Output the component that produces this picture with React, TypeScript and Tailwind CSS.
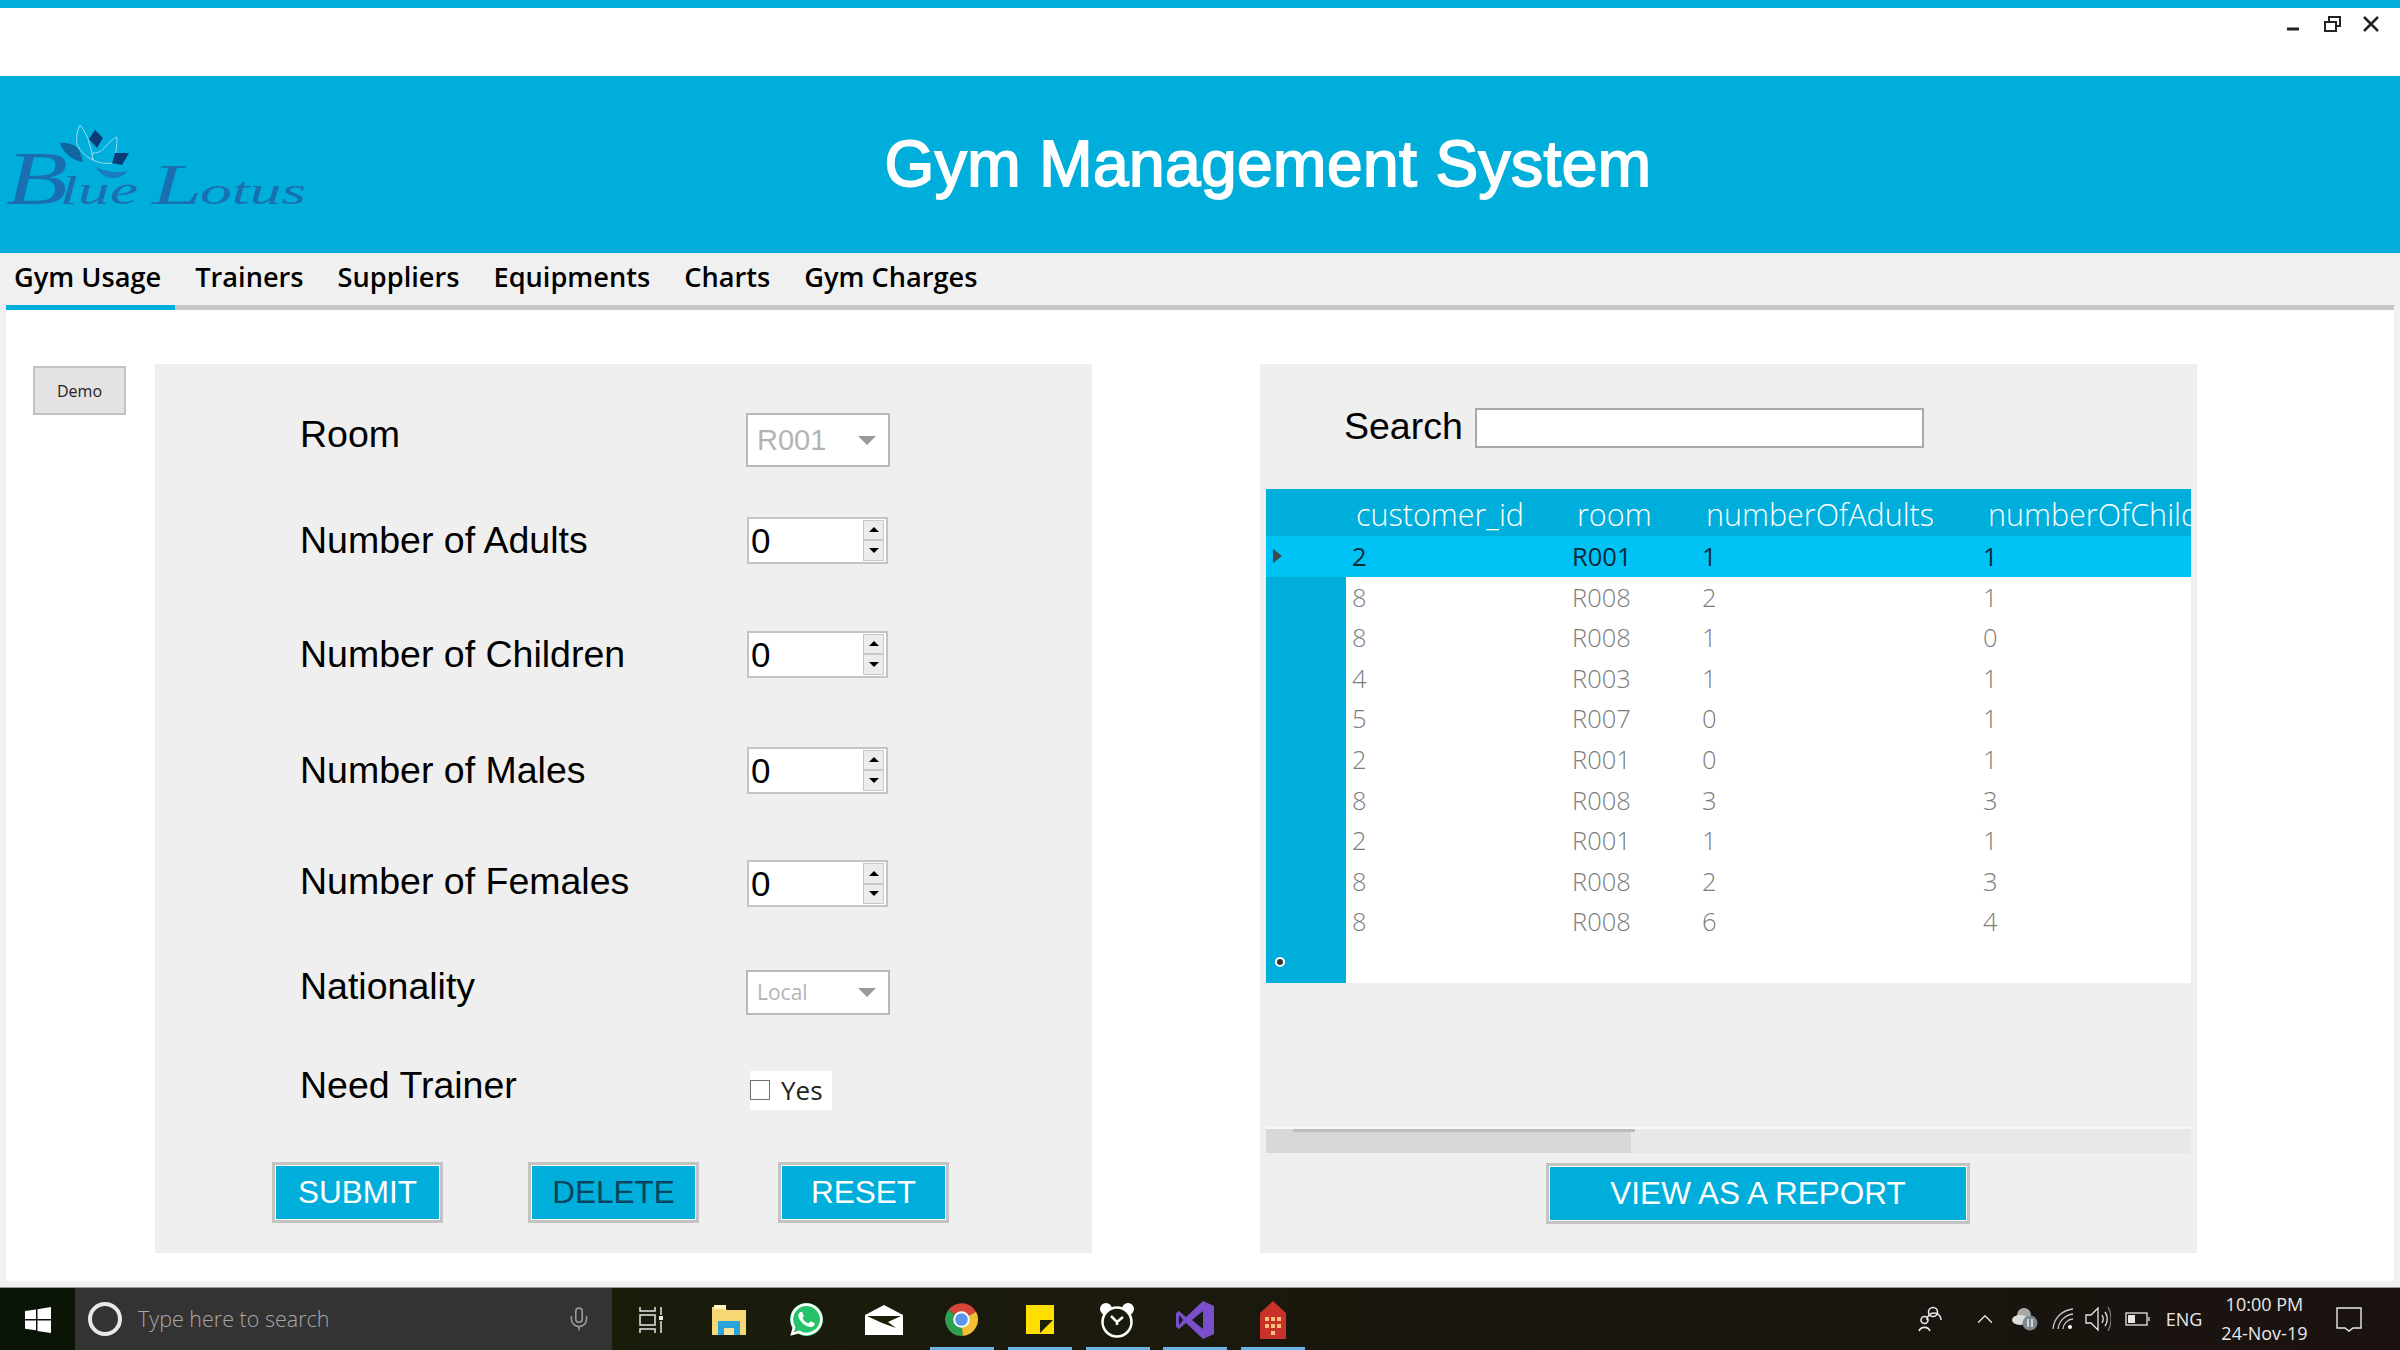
import { FaWhatsapp } from "react-icons/fa";
import { ChevronUp, Mic } from "lucide-react";

const rows = [
  ["2", "R001", "1", "1"],
  ["8", "R008", "2", "1"],
  ["8", "R008", "1", "0"],
  ["4", "R003", "1", "1"],
  ["5", "R007", "0", "1"],
  ["2", "R001", "0", "1"],
  ["8", "R008", "3", "3"],
  ["2", "R001", "1", "1"],
  ["8", "R008", "2", "3"],
  ["8", "R008", "6", "4"],
];

const logoFont = '"Liberation Serif", serif';

function Logo() {
  return (
    <svg width="320" height="110" viewBox="0 0 320 110" className="ml-[6px] mt-[36px]">
      <path d="M71 32c-1-7 0-13 3-19 4 5 8 12 9 18 2 5 3 10 4 17-7-3-13-9-16-16zM87 48c-1-4-1-6 0-7 7 0 10-3 14-8 4-4 7-7 10-8 0 9-1 19-5 26-6 1-13 0-19-3z" fill="#00aedb" fillOpacity="0.6" stroke="#9adcf0" strokeWidth="1" />
      <path d="M89 18l8 8-6 10-8-9z" fill="#0b3a78" />
      <path d="M54 31c8-1 16 2 19 7 2 4 3 8 4 12-10-1-20-9-23-19z" fill="#12669f" />
      <path d="M109 41h14l-7 12-10-2z" fill="#0b3a78" />
      <path d="M90 55c10 5 22 6 32 4-4 5-10 7-15 7-8 0-14-5-17-11z" fill="#1a7cc0" />
      <text x="0" y="92" textLength="62" lengthAdjust="spacingAndGlyphs" fontFamily={logoFont} fontStyle="italic" fontSize="76" fill="#1a6fb0">B</text>
      <text x="54" y="92" textLength="78" lengthAdjust="spacingAndGlyphs" fontFamily={logoFont} fontStyle="italic" fontSize="40" fill="#1a6fb0">lue</text>
      <text x="146" y="92" textLength="50" lengthAdjust="spacingAndGlyphs" fontFamily={logoFont} fontStyle="italic" fontSize="56" fill="#1a6fb0">L</text>
      <text x="194" y="92" textLength="106" lengthAdjust="spacingAndGlyphs" fontFamily={logoFont} fontStyle="italic" fontSize="38" fill="#1a6fb0">otus</text>
    </svg>
  );
}

function SpinBox({ className }: { className?: string }) {
  return (
    <div className={`w-[141px] h-[47px] ml-[1px] bg-white border-[2px] border-[#c4c4c4] flex items-center justify-between pl-[1px] pr-[2px] ${className ?? ""}`}>
      <span className="font-['Liberation_Sans',sans-serif] text-[35px] text-black leading-none pl-[1px]">0</span>
      <div className="flex flex-col w-[21px] h-[41px]">
        <div className="flex-1 bg-[#ececec] border border-[#c8c8c8] flex items-center justify-center">
          <div className="w-0 h-0 border-x-[5px] border-x-transparent border-b-[5px] border-b-black" />
        </div>
        <div className="flex-1 bg-[#ececec] border border-[#c8c8c8] flex items-center justify-center">
          <div className="w-0 h-0 border-x-[5px] border-x-transparent border-t-[5px] border-t-black" />
        </div>
      </div>
    </div>
  );
}

function Combo({ value, className, textClass }: { value: string; className: string; textClass: string }) {
  return (
    <div className={`w-[144px] bg-white border-[2px] border-[#b9b9b9] flex items-center justify-between pl-[9px] pr-[12px] ${className}`}>
      <span className={`text-[#b4b4b4] leading-none ${textClass}`}>{value}</span>
      <div className="w-0 h-0 border-x-[9px] border-x-transparent border-t-[9px] border-t-[#9a9a9a]" />
    </div>
  );
}

function ActionButton({ label, width, dark }: { label: string; width: string; dark?: boolean }) {
  return (
    <div className={`h-[61px] ${width} bg-white border-[3px] border-[#c3c3c3] p-[1px]`}>
      <div className={`h-full bg-[#00aedb] flex items-center justify-center font-['Liberation_Sans',sans-serif] text-[31.5px] ${dark ? "text-[#0a4560]" : "text-white"}`}>
        {label}
      </div>
    </div>
  );
}

function FormRow({ label, height, children }: { label: string; height: string; children: React.ReactNode }) {
  return (
    <div className={`flex items-center ${height}`}>
      <div className="w-[591px] pl-[145px] font-['Liberation_Sans',sans-serif] text-[37.5px] text-black whitespace-nowrap">{label}</div>
      {children}
    </div>
  );
}

function Slot({ children, active }: { children: React.ReactNode; active?: boolean }) {
  return (
    <div className="relative w-[77.75px] h-full flex items-center justify-center pt-[1px]">
      {children}
      {active && <div className="absolute bottom-0 left-[7px] w-[64px] h-[3px] bg-[#6cb2e4]" />}
    </div>
  );
}

export default function App() {
  return (
    <div className="w-[2400px] h-[1350px] flex flex-col overflow-hidden bg-white font-['Open_Sans',sans-serif]">
      <div className="h-[8px] bg-[#00aedb]" />

      {/* window buttons */}
      <div className="h-[68px] bg-white flex justify-end items-start pt-[6px]">
        <svg width="100" height="22" viewBox="0 0 100 22" className="mr-[17px]" fill="none" stroke="#222" strokeWidth="2">
          <path d="M4 15h12" strokeWidth="3" />
          <path d="M42 8h11v9H42zM46 8V3h11v9h-4" />
          <path d="M81 3l14 14M95 3L81 17" strokeWidth="2.5" />
        </svg>
      </div>

      {/* header */}
      <div className="h-[177px] bg-[#00aedb] relative flex">
        <Logo />
        <div className="absolute inset-0 flex items-center justify-center pl-[136px] pb-[1px] font-['Liberation_Sans',sans-serif] text-[64px] tracking-[0.45px] [-webkit-text-stroke:1.8px_white] text-white">
          Gym Management System
        </div>
      </div>

      {/* tabs */}
      <div className="h-[57px] bg-[#f0f0f0] px-[6px] flex flex-col justify-end">
        <div className="flex-1 flex items-center pl-[8px] pb-[4px] gap-[34px] font-semibold text-[27.2px] text-black leading-none">
          <span>Gym Usage</span>
          <span>Trainers</span>
          <span>Suppliers</span>
          <span>Equipments</span>
          <span>Charts</span>
          <span>Gym Charges</span>
        </div>
        <div className="h-[5px] bg-[#c8c8c8]">
          <div className="w-[169px] h-full bg-[#00aedb]" />
        </div>
      </div>

      {/* content */}
      <div className="flex-1 flex bg-white border-x-[6px] border-[#f0f0f0] pt-[54px]">
        <div className="ml-[27px] mt-[2px] w-[93px] h-[49px] bg-[#e3e3e3] border-[2px] border-[#c2c2c2] flex items-center justify-center text-[16px] text-[#222]">
          Demo
        </div>

        <div className="ml-[29px] w-[937px] h-[889px] bg-[#efefef] pt-[17px] flex flex-col">
          <FormRow label="Room" height="h-[106px]">
            <Combo value="R001" className="h-[54px] mt-[12px]" textClass="font-['Liberation_Sans',sans-serif] text-[29px]" />
          </FormRow>
          <FormRow label="Number of Adults" height="h-[106px]"><SpinBox /></FormRow>
          <FormRow label="Number of Children" height="h-[122px]"><SpinBox /></FormRow>
          <FormRow label="Number of Males" height="h-[110px]"><SpinBox /></FormRow>
          <FormRow label="Number of Females" height="h-[112px]"><SpinBox className="mt-[5px]" /></FormRow>
          <FormRow label="Nationality" height="h-[98px]">
            <Combo value="Local" className="h-[45px] mt-[12px]" textClass="text-[21px]" />
          </FormRow>
          <FormRow label="Need Trainer" height="h-[100px]">
            <div className="ml-[4px] mt-[10px] w-[82px] h-[39px] bg-white flex items-center gap-[11px]">
              <div className="w-[20px] h-[20px] border-[1.5px] border-[#707070] bg-white" />
              <span className="text-[26px] text-[#222] leading-none">Yes</span>
            </div>
          </FormRow>
          <div className="flex pl-[117px] mt-[27px]">
            <ActionButton label="SUBMIT" width="w-[171px]" />
            <ActionButton label="DELETE" width="w-[171px] ml-[85px]" dark />
            <ActionButton label="RESET" width="w-[171px] ml-[79px]" />
          </div>
        </div>

        <div className="ml-[168px] w-[937px] h-[889px] bg-[#efefef] flex flex-col">
          <div className="h-[125px] flex items-start pt-[44px] pl-[84px] gap-[12px]">
            <span className="font-['Liberation_Sans',sans-serif] text-[37.5px] text-black leading-none">Search</span>
            <div className="w-[449px] h-[40px] bg-white border-[2px] border-[#a9a9a9]" />
          </div>
          <div className="mx-[6px] w-[925px] overflow-hidden">
            <div className="h-[47px] bg-[#00aedb] flex items-center text-white text-[30.5px] font-light leading-none whitespace-nowrap pt-[3px]">
              <div className="w-[80px] shrink-0" />
              <div className="w-[220px] pl-[10px] shrink-0">customer_id</div>
              <div className="w-[135px] pl-[11px] shrink-0">room</div>
              <div className="w-[281px] pl-[5px] shrink-0">numberOfAdults</div>
              <div className="pl-[6px] shrink-0 w-[209px] overflow-hidden">numberOfChildren</div>
            </div>
            {rows.map((r, i) => (
              <div key={i} className={`h-[40.6px] flex items-stretch text-[25.5px] leading-none ${i === 0 ? "bg-[#00c3f5] text-[#0b2a38] font-normal" : "bg-[#00aedb] text-[#7c7c7c] font-light"}`}>
                <div className="w-[80px] flex items-center pl-[7px] shrink-0">
                  {i === 0 && <div className="w-0 h-0 border-y-[7px] border-y-transparent border-l-[9px] border-l-[#3f4a4f]" />}
                </div>
                <div className={`flex-1 flex items-center pt-[1px] ${i === 0 ? "" : "bg-white"}`}>
                  <div className="w-[220px] pl-[6px] shrink-0">{r[0]}</div>
                  <div className="w-[135px] pl-[6px] shrink-0">{r[1]}</div>
                  <div className="w-[281px] pl-[1px] shrink-0">{r[2]}</div>
                  <div className="pl-[1px] shrink-0">{r[3]}</div>
                </div>
              </div>
            ))}
            <div className="h-[41px] flex bg-white">
              <div className="w-[80px] h-full bg-[#00aedb] flex items-center pl-[9px]">
                <div className="w-[10px] h-[10px] rounded-full bg-[#333] border-[2px] border-white" />
              </div>
            </div>
          </div>

          {/* horizontal scrollbar */}
          <div className="mx-[6px] mt-[144px] w-[925px] h-[26px] bg-[#e8e8e8] border-t-[2px] border-[#f8f8f8] relative">
            <div className="absolute top-0 left-[27px] w-[342px] h-[3px] bg-[#bdbdbd]" />
            <div className="w-[365px] h-full bg-[#d8d8d8]" />
          </div>

          <ActionButton label="VIEW AS A REPORT" width="w-[424px] ml-[286px] mt-[10px]" />
        </div>
      </div>

      <div className="h-[6px] bg-[#f0f0f0]" />

      {/* taskbar */}
      <div className="h-[63px] flex items-stretch bg-gradient-to-r from-[#1a2008] to-[#1a1210] border-t-[1px] border-[#9a9a9a] text-white">
        <div className="w-[75px] bg-[#0a1508] flex items-center justify-center pt-[1px]">
          <svg width="26" height="26" viewBox="0 0 26 26" fill="#fff">
            <path d="M0 4l11-1.600V12H0zM12.500 2.200L26 0v12H12.500zM0 13.500h11v9.800L0 21.800zM12.500 13.500H26V26l-13.500-2z" />
          </svg>
        </div>
        <div className="w-[537px] bg-[#333333] flex items-center pl-[13px]">
          <div className="w-[34px] h-[34px] rounded-full border-[4px] border-[#e8e8e8]" />
          <span className="ml-[16px] text-[21.5px] text-[#a8a8a8] font-light">Type here to search</span>
          <Mic className="ml-auto mr-[20px] w-[26px] h-[28px] text-[#9a9a9a]" strokeWidth={1.5} />
        </div>

        <Slot>
          <svg width="24" height="28" viewBox="0 0 24 28" fill="none" stroke="#e8e8e8" strokeWidth="1.5">
            <path d="M1 1v4h15V1M1 9h15v10H1zM1 27v-4h15v4M22 1v8M22 15v12" />
            <rect x="20" y="10" width="4" height="4" fill="#e8e8e8" stroke="none" />
          </svg>
        </Slot>
        <Slot>
          <svg width="34" height="30" viewBox="0 0 34 30">
            <path d="M0 2h12l3 3h19v25H0z" fill="#f7d774" />
            <rect x="2" y="0" width="12" height="4" fill="#fff3c4" />
            <path d="M6 30V16h22v14h-6v-7H12v7z" fill="#2aa5dc" />
            <rect x="12" y="23" width="10" height="7" fill="#f7e29a" />
          </svg>
        </Slot>
        <Slot>
          <div className="w-[33px] h-[33px] rounded-full bg-[#25c36a] flex items-center justify-center">
            <FaWhatsapp className="w-[37px] h-[37px] shrink-0 text-white" />
          </div>
        </Slot>
        <Slot>
          <svg width="38" height="30" viewBox="0 0 38 30">
            <path d="M0 10L19 0l19 10v20H0z" fill="#fff" />
            <path d="M2 11h34l-13 6 8 6-14-5z" fill="#1a2008" />
          </svg>
        </Slot>
        <Slot active>
          <svg width="35" height="35" viewBox="0 0 36 36">
            <path d="M18 18L4.500 8A17 17 0 0 1 33 10z" fill="#d8453a" />
            <path d="M18 18l15-8a17 17 0 0 1-14 25z" fill="#f0c030" />
            <path d="M18 18l1 17A17 17 0 0 1 4.500 8z" fill="#2f9e50" />
            <circle cx="18" cy="18" r="8.500" fill="#fff" />
            <circle cx="18" cy="18" r="6.500" fill="#5a96ea" />
          </svg>
        </Slot>
        <Slot active>
          <svg width="28" height="29" viewBox="0 0 28 29">
            <path d="M0 0h28v29H0z" fill="#ffdf00" />
            <path d="M14 15h13L14 28z" fill="#1a2008" />
          </svg>
        </Slot>
        <Slot active>
          <svg width="36" height="36" viewBox="0 0 36 36" fill="none">
            <circle cx="7" cy="7" r="6" fill="#fff" />
            <circle cx="29" cy="7" r="6" fill="#fff" />
            <circle cx="18" cy="20" r="14.500" fill="#1a1a10" stroke="#fff" strokeWidth="2.500" />
            <path d="M12 14l6 6 6-5M18 20v3" stroke="#fff" strokeWidth="2.500" />
          </svg>
        </Slot>
        <Slot active>
          <svg width="38" height="38" viewBox="0 0 38 38">
            <path d="M27 0l11 5v28l-11 5L10 22l-7 6-3-2V12l3-2 7 6z" fill="#7b4fc9" />
            <path d="M27 10v18L16 19z" fill="#1a1a10" />
            <path d="M3 14l4 5-4 5z" fill="#1a1a10" />
          </svg>
        </Slot>
        <Slot active>
          <svg width="26" height="38" viewBox="0 0 26 38">
            <path d="M0 12L13 0l13 12v26H0z" fill="#c8322a" />
            <rect x="5" y="16" width="4" height="4" fill="#f4c27a" />
            <rect x="11" y="16" width="4" height="4" fill="#f4c27a" />
            <rect x="17" y="16" width="4" height="4" fill="#f4c27a" />
            <rect x="5" y="23" width="4" height="4" fill="#f4c27a" />
            <rect x="11" y="23" width="4" height="4" fill="#f4c27a" />
            <rect x="17" y="23" width="4" height="4" fill="#f4c27a" />
            <rect x="11" y="30" width="4" height="4" fill="#f4c27a" />
          </svg>
        </Slot>

        {/* tray */}
        <div className="flex items-center ml-[606px] text-[#e8e8e8]">
          <svg width="24" height="26" viewBox="0 0 24 26" fill="none" stroke="#e8e8e8" strokeWidth="1.6">
            <circle cx="15" cy="6" r="4.500" />
            <path d="M9 14a7 7 0 0 1 14 0" />
            <circle cx="6.500" cy="14" r="3.500" />
            <path d="M1 25a6 6 0 0 1 11 0" />
          </svg>
          <ChevronUp className="ml-[30px] w-[26px] h-[26px]" strokeWidth={1.2} />
          <svg width="26" height="24" viewBox="0 0 26 24" className="ml-[14px]">
            <circle cx="12" cy="8" r="7" fill="#aaa" />
            <ellipse cx="8" cy="13" rx="8" ry="5" fill="#ddd" />
            <circle cx="18" cy="16" r="7.500" fill="#7d8a90" />
            <path d="M16 12v8M20 12v8" stroke="#eee" strokeWidth="1.5" />
          </svg>
          <svg width="22" height="22" viewBox="0 0 22 22" fill="none" stroke="#c8c8c8" strokeWidth="1.3" className="ml-[14px]">
            <path d="M1 21C2 10 10 2 21 1M6 21c1-8 7-14 15-15M11 21c0-5 5-10 10-10" />
            <circle cx="18" cy="19" r="2" fill="#fff" stroke="none" />
          </svg>
          <svg width="26" height="26" viewBox="0 0 26 26" fill="none" stroke="#e8e8e8" strokeWidth="1.3" className="ml-[11px]">
            <path d="M1 9h5l7-7v22l-7-7H1zM17 9c1.500 2.500 1.500 5.500 0 8M20 6c3 4 3 10 0 14" />
            <path d="M23 1c4 7 4 17 0 24" stroke="#777" />
          </svg>
          <svg width="26" height="14" viewBox="0 0 26 14" fill="none" stroke="#e8e8e8" strokeWidth="1.3" className="ml-[14px]">
            <rect x="1" y="1" width="21" height="12" />
            <rect x="3" y="3" width="7" height="8" fill="#e8e8e8" stroke="none" />
            <path d="M24 5v4" />
          </svg>
          <span className="ml-[15px] text-[18px] leading-none">ENG</span>
          <div className="ml-[12px] w-[100px] flex flex-col items-center text-[18px] leading-[29px] whitespace-nowrap">
            <span>10:00 PM</span>
            <span>24-Nov-19</span>
          </div>
          <svg width="26" height="26" viewBox="0 0 26 26" fill="none" stroke="#e8e8e8" strokeWidth="1.4" className="ml-[22px]">
            <path d="M1 2h24v20H17l-4 3-4-3H1z" />
          </svg>
        </div>
      </div>
    </div>
  );
}
